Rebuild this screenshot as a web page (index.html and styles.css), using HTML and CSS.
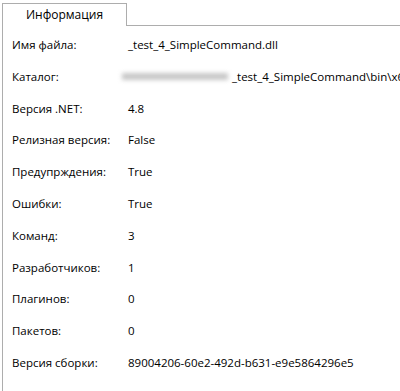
FILE: index.html
```html
<!DOCTYPE html>
<html lang="ru">

<head>
  <meta charset="UTF-8">
  <meta name="viewport" content="width=device-width, initial-scale=1.0">
  <title>Информация</title>
  <link rel="stylesheet" href="styles.css">
</head>

<body>
  <div id="root">
    <div class="tabs">
      <div class="tab active">Информация</div>
      <div class="tab-rest"></div>
    </div>
    <div class="panel">
      <div class="row"><span class="label">Имя файла:</span><span class="value">_test_4_SimpleCommand.dll</span></div>
      <div class="row"><span class="label">Каталог:</span><span class="value"><span class="blur"></span>_test_4_SimpleCommand\bin\x64\Debug</span></div>
      <div class="row"><span class="label">Версия .NET:</span><span class="value">4.8</span></div>
      <div class="row"><span class="label">Релизная версия:</span><span class="value">False</span></div>
      <div class="row"><span class="label">Предупрждения:</span><span class="value">True</span></div>
      <div class="row"><span class="label">Ошибки:</span><span class="value">True</span></div>
      <div class="row"><span class="label">Команд:</span><span class="value">3</span></div>
      <div class="row"><span class="label">Разработчиков:</span><span class="value">1</span></div>
      <div class="row"><span class="label">Плагинов:</span><span class="value">0</span></div>
      <div class="row"><span class="label">Пакетов:</span><span class="value">0</span></div>
      <div class="row"><span class="label">Версия сборки:</span><span class="value">89004206-60e2-492d-b631-e9e5864296e5</span></div>
    </div>
  </div>
</body>

</html>
```

FILE: styles.css
```css
* {
  margin: 0;
  padding: 0;
  box-sizing: border-box;
}

body {
  width: 400px;
  height: 391px;
  overflow: hidden;
  background-color: #fff;
  font-family: "Open Sans", "Noto Sans", sans-serif;
  font-size: 11.5px;
  color: #000;
}

#root {
  display: flex;
  flex-direction: column;
  height: 391px;
  padding: 3px 0 0 2px;
}

.tabs {
  display: flex;
  align-items: flex-end;
  height: 23px;
  flex-shrink: 0;
}

.tab {
  width: 125px;
  height: 23px;
  border: 1px solid #adadad;
  border-bottom: none;
  text-align: center;
  line-height: 22px;
  font-size: 12px;
}

.tab-rest {
  flex: 1;
  border-bottom: 1px solid #adadad;
}

.panel {
  flex: 1;
  min-height: 0;
  overflow: hidden;
  border-left: 1px solid #adadad;
  padding: 11px 0 0 9px;
}

.row {
  display: flex;
  height: 31.8px;
  line-height: 16px;
  white-space: nowrap;
}

.label {
  width: 116px;
  flex-shrink: 0;
}

.value {
  display: flex;
  align-items: center;
  height: 16px;
}

.blur {
  display: inline-block;
  width: 106px;
  height: 7px;
  margin: 0 4px 0 -6px;
  background-color: #c8c8c8;
  filter: blur(2px);
}
```
